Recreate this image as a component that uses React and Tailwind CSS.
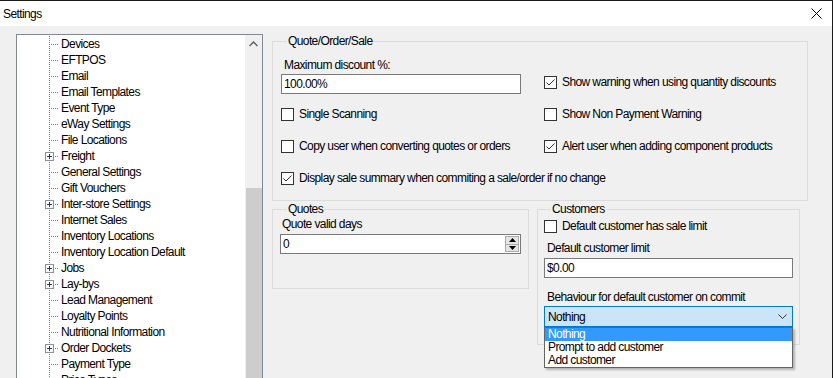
import React from 'react'

const treeItems = [
  ['Devices'],
  ['EFTPOS'],
  ['Email'],
  ['Email Templates'],
  ['Event Type'],
  ['eWay Settings'],
  ['File Locations'],
  ['Freight', true],
  ['General Settings'],
  ['Gift Vouchers'],
  ['Inter-store Settings', true],
  ['Internet Sales'],
  ['Inventory Locations'],
  ['Inventory Location Default'],
  ['Jobs', true],
  ['Lay-bys', true],
  ['Lead Management'],
  ['Loyalty Points'],
  ['Nutritional Information'],
  ['Order Dockets', true],
  ['Payment Type'],
  ['Price Types'],
]

function Connector({ plus }) {
  const vdots = []
  for (let y = 0; y < 16; y += 2) vdots.push(<rect key={'v' + y} x="6" y={y} width="1" height="1" fill="#808080" />)
  const hdots = []
  for (let x = plus ? 12 : 8; x < 16; x += 2) hdots.push(<rect key={'h' + x} x={x} y="8" width="1" height="1" fill="#808080" />)
  return (
    <svg width="16" height="16" className="shrink-0">
      {vdots}
      {hdots}
      {plus && (
        <g>
          <rect x="2.5" y="4.5" width="8" height="8" fill="#fff" stroke="#919191" />
          <rect x="4" y="8" width="5" height="1" fill="#1e395b" />
          <rect x="6" y="6" width="1" height="5" fill="#1e395b" />
        </g>
      )}
    </svg>
  )
}

function TreeRow({ label, plus }) {
  return (
    <div className="flex h-[16px] items-center">
      <div className="w-[26px] shrink-0" />
      <Connector plus={plus} />
      <span className="ml-[2px] whitespace-nowrap">{label}</span>
    </div>
  )
}

function CheckBox({ checked, label }) {
  return (
    <div className="flex h-[16px] items-center whitespace-nowrap">
      <div className="w-[13px] h-[13px] border border-[#333] bg-white shrink-0 flex items-center justify-center">
        {checked && (
          <svg width="11" height="11" viewBox="0 0 11 11">
            <path d="M1.5 5.5 L4 8 L9.5 2.5" stroke="#333" strokeWidth="1" fill="none" />
          </svg>
        )}
      </div>
      <span className="ml-[5px]">{label}</span>
    </div>
  )
}

function TextBox({ value, className }) {
  return (
    <div className={`h-[20px] border border-[#7a7a7a] bg-white flex items-center pl-[2px] ${className}`}>
      {value}
    </div>
  )
}

export default function App() {
  return (
    <div className="w-[833px] h-[378px] overflow-hidden flex flex-col border-r border-[#1a1a1a] text-[12px] leading-[14px] tracking-[-0.6px] text-black font-['Liberation_Sans',Arial,sans-serif]">
      <div className="h-[26px] shrink-0 bg-white border-t border-[#1a1a1a] flex items-center justify-between pl-[3px] pr-[10px]">
        <span>Settings</span>
        <svg width="11" height="11" viewBox="0 0 11 11">
          <path d="M0.5 0.5 L10.5 10.5 M10.5 0.5 L0.5 10.5" stroke="#000" strokeWidth="1" />
        </svg>
      </div>

      <div className="flex-1 bg-[#f0f0f0] flex items-start pt-[8px] pl-[16px]">
        <div className="w-[247px] h-[400px] shrink-0 border border-[#828790] bg-white flex">
          <div className="flex-1 pt-[1px]">
            {treeItems.map(([label, plus]) => (
              <TreeRow key={label} label={label} plus={plus} />
            ))}
          </div>
          <div className="w-[17px] bg-[#f0f0f0] flex flex-col">
            <div className="h-[17px] flex items-center justify-center">
              <svg width="9" height="6" viewBox="0 0 9 6">
                <path d="M0.5 5 L4.5 1 L8.5 5" stroke="#606060" strokeWidth="1.5" fill="none" />
              </svg>
            </div>
            <div className="mt-[136px] ml-[1px] h-[200px] bg-[#cdcdcd]" />
          </div>
        </div>

        <div className="ml-[9px] flex flex-col">
          <fieldset className="w-[536px] border border-[#dcdcdc] pl-[8px] pb-[14px]">
            <legend className="ml-[6px] px-[1px] leading-[14px]">Quote/Order/Sale</legend>
            <div className="flex">
              <div className="w-[240px] flex flex-col">
                <div className="mt-[10px] pl-[3px] h-[14px]">Maximum discount %:</div>
                <TextBox value="100.00%" className="mt-[2px] w-[240px]" />
              </div>
              <div className="ml-[23px] self-end mb-[4px]">
                <CheckBox checked label="Show warning when using quantity discounts" />
              </div>
            </div>
            <div className="flex mt-[12px]">
              <div className="w-[263px]">
                <CheckBox label="Single Scanning" />
              </div>
              <CheckBox label="Show Non Payment Warning" />
            </div>
            <div className="flex mt-[16px]">
              <div className="w-[263px]">
                <CheckBox label="Copy user when converting quotes or orders" />
              </div>
              <CheckBox checked label="Alert user when adding component products" />
            </div>
            <div className="mt-[16px]">
              <CheckBox checked label="Display sale summary when commiting a sale/order if no change" />
            </div>
          </fieldset>

          <div className="flex items-start mt-[1px]">
            <fieldset className="w-[257px] border border-[#dcdcdc] pl-[7px] pb-[34px]">
              <legend className="ml-[7px] px-[1px] leading-[14px]">Quotes</legend>
              <div className="mt-[1px] pl-[2px] h-[14px]">Quote valid days</div>
              <div className="mt-[3px] w-[241px] h-[20px] border border-[#7a7a7a] bg-white flex items-center justify-between pl-[2px] pr-[1px]">
                <span>0</span>
                <div className="w-[14px] h-[16px] flex flex-col border border-[#acacac] bg-[#e5e5e5]">
                  <div className="flex-1 flex items-center justify-center border-b border-[#acacac]">
                    <svg width="7" height="4" viewBox="0 0 7 4"><path d="M0 4 L3.5 0 L7 4 Z" fill="#000" /></svg>
                  </div>
                  <div className="flex-1 flex items-center justify-center">
                    <svg width="7" height="4" viewBox="0 0 7 4"><path d="M0 0 L3.5 4 L7 0 Z" fill="#000" /></svg>
                  </div>
                </div>
              </div>
            </fieldset>

            <fieldset className="ml-[8px] w-[263px] border border-[#dcdcdc] pl-[6px] pb-[17px]">
              <legend className="ml-[7px] px-[1px] leading-[14px]">Customers</legend>
              <div className="mt-[2px]">
                <CheckBox label="Default customer has sale limit" />
              </div>
              <div className="mt-[7px] pl-[3px] h-[14px]">Default customer limit</div>
              <TextBox value="$0.00" className="mt-[3px] w-[249px]" />
              <div className="mt-[12px] pl-[3px] h-[14px] whitespace-nowrap">Behaviour for default customer on commit</div>
              <div className="relative mt-[2px] w-[249px]">
                <div className="h-[21px] border border-[#0078d7] bg-[#cce4f7] flex items-center justify-between pl-[3px] pr-[5px]">
                  <span>Nothing</span>
                  <svg width="9" height="5" viewBox="0 0 9 5">
                    <path d="M0.5 0.5 L4.5 4.5 L8.5 0.5" stroke="#333" strokeWidth="1" fill="none" />
                  </svg>
                </div>
                <div className="absolute top-full left-0 w-[249px] border border-[#646464] bg-white shadow-[2px_2px_2px_rgba(0,0,0,0.25)] leading-[13px]">
                  <div className="h-[13px] pl-[3px] bg-[#3399ff] text-white">Nothing</div>
                  <div className="h-[13px] pl-[3px]">Prompt to add customer</div>
                  <div className="h-[13px] pl-[3px]">Add customer</div>
                </div>
              </div>
            </fieldset>
          </div>
        </div>
      </div>
    </div>
  )
}
